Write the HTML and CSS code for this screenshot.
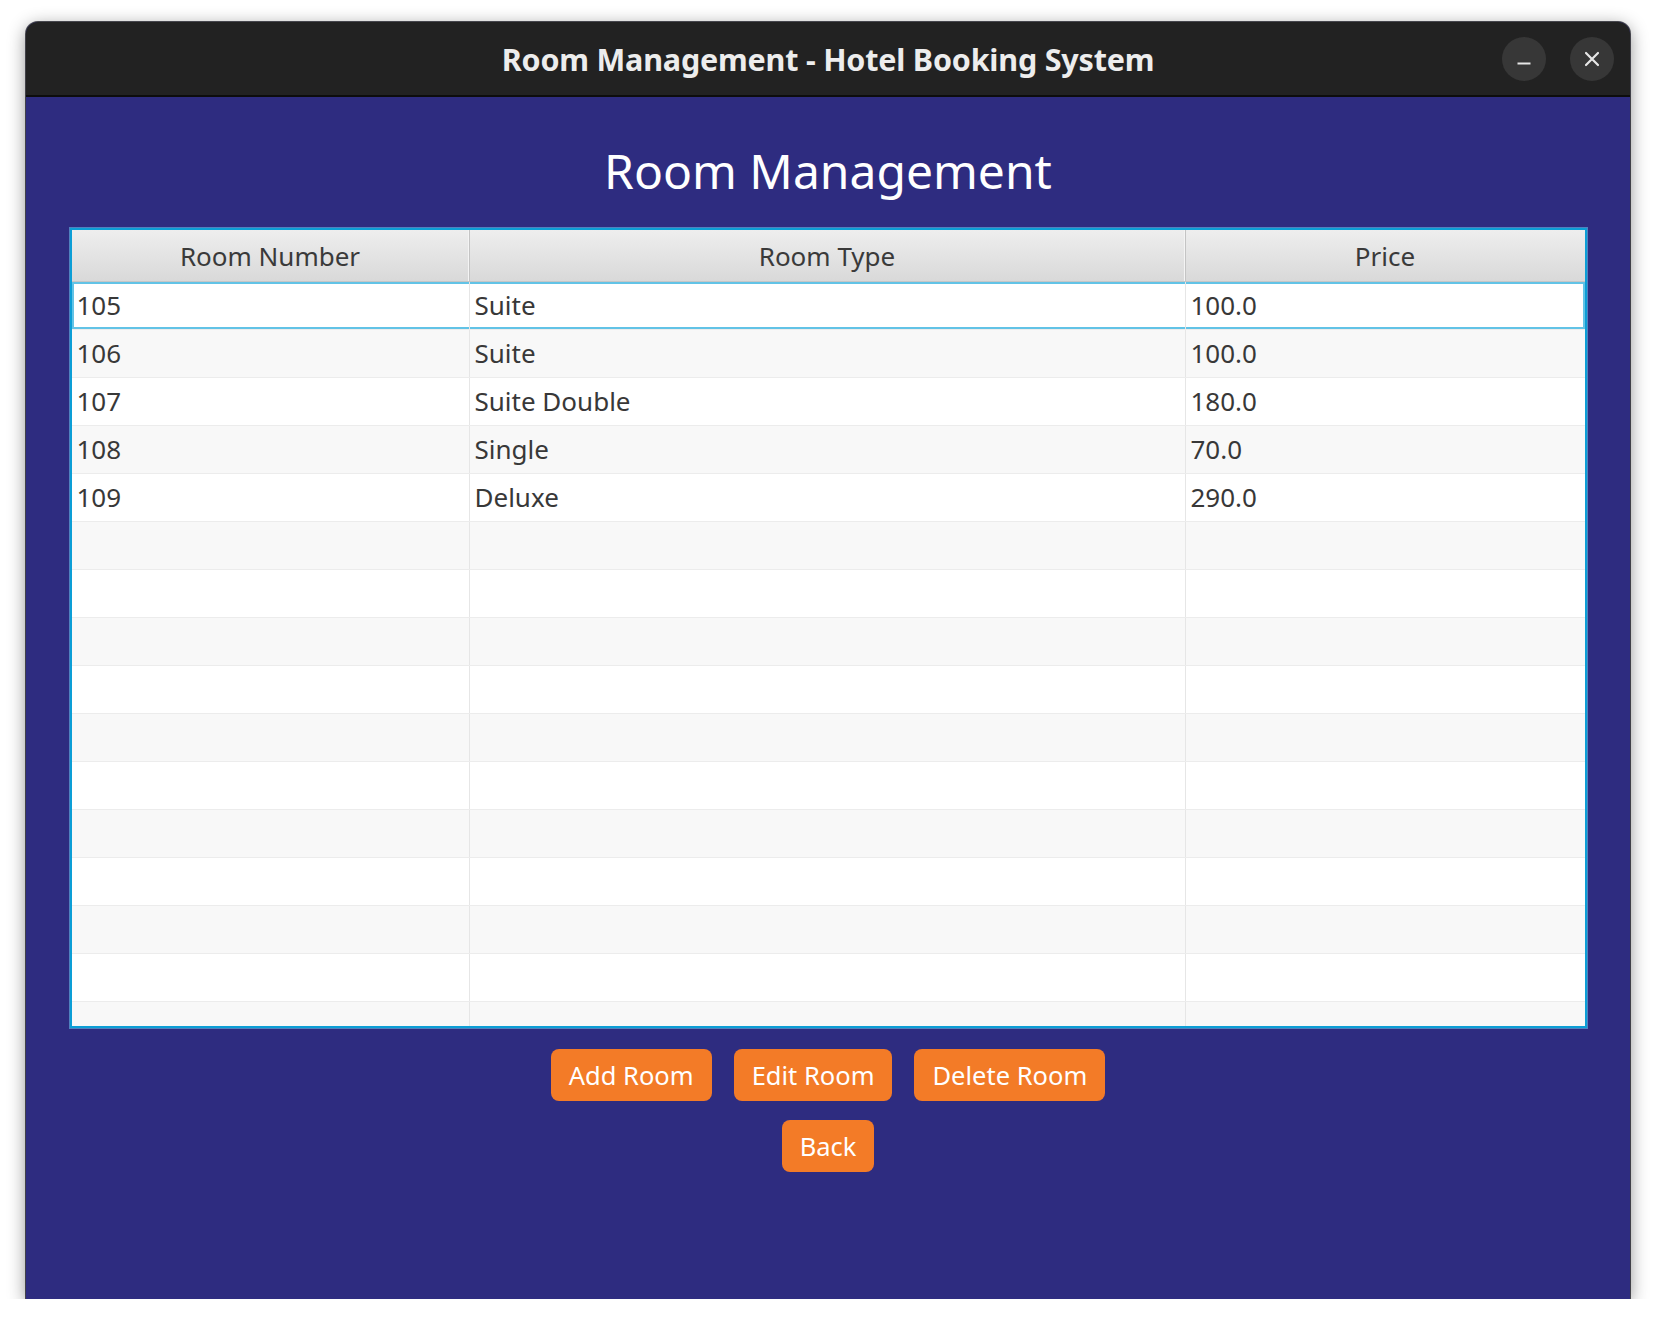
FILE: index.html
```html
<!DOCTYPE html>
<html lang="en">
<head>
<meta charset="utf-8">
<title>Room Management - Hotel Booking System</title>
<link rel="stylesheet" href="styles.css">
</head>
<body>
<div class="window">
  <header class="titlebar">
    <div class="tb-spacer"></div>
    <div class="title">Room Management - Hotel Booking System</div>
    <div class="controls">
      <button class="ctrl" aria-label="Minimize">
        <svg width="16" height="16" viewBox="0 0 16 16"><path d="M1.5 12.5 H14.5" stroke="#e6e6e6" stroke-width="2" stroke-linecap="butt"/></svg>
      </button>
      <button class="ctrl" aria-label="Close">
        <svg width="16" height="16" viewBox="0 0 16 16"><path d="M2 2 L14 14 M14 2 L2 14" stroke="#e6e6e6" stroke-width="2.2" stroke-linecap="round"/></svg>
      </button>
    </div>
  </header>
  <main class="content">
    <h1 class="heading">Room Management</h1>
    <div class="table">
      <div class="thead">
        <div class="th">Room Number</div>
        <div class="th">Room Type</div>
        <div class="th">Price</div>
      </div>
      <div class="tbody">
        <div class="row focused"><div class="td">105</div><div class="td">Suite</div><div class="td">100.0</div></div>
        <div class="row"><div class="td">106</div><div class="td">Suite</div><div class="td">100.0</div></div>
        <div class="row"><div class="td">107</div><div class="td">Suite Double</div><div class="td">180.0</div></div>
        <div class="row"><div class="td">108</div><div class="td">Single</div><div class="td">70.0</div></div>
        <div class="row"><div class="td">109</div><div class="td">Deluxe</div><div class="td">290.0</div></div>
        <div class="row"><div class="td"></div><div class="td"></div><div class="td"></div></div>
        <div class="row"><div class="td"></div><div class="td"></div><div class="td"></div></div>
        <div class="row"><div class="td"></div><div class="td"></div><div class="td"></div></div>
        <div class="row"><div class="td"></div><div class="td"></div><div class="td"></div></div>
        <div class="row"><div class="td"></div><div class="td"></div><div class="td"></div></div>
        <div class="row"><div class="td"></div><div class="td"></div><div class="td"></div></div>
        <div class="row"><div class="td"></div><div class="td"></div><div class="td"></div></div>
        <div class="row"><div class="td"></div><div class="td"></div><div class="td"></div></div>
        <div class="row"><div class="td"></div><div class="td"></div><div class="td"></div></div>
        <div class="row"><div class="td"></div><div class="td"></div><div class="td"></div></div>
        <div class="row"><div class="td"></div><div class="td"></div><div class="td"></div></div>
        <div class="row"><div class="td"></div><div class="td"></div><div class="td"></div></div>
      </div>
    </div>
    <div class="actions">
      <div class="btn-row">
        <button class="btn">Add Room</button>
        <button class="btn">Edit Room</button>
        <button class="btn">Delete Room</button>
      </div>
      <div class="btn-row">
        <button class="btn">Back</button>
      </div>
    </div>
  </main>
</div>
</body>
</html>
```

FILE: styles.css
```css
* { box-sizing: border-box; }

html, body {
  margin: 0;
  padding: 0;
  background: #ffffff;
}

body {
  font-family: "Noto Sans", "Open Sans", "DejaVu Sans", sans-serif;
  padding: 22px 0 0 26px;
}

.window {
  width: 1604px;
  height: 1277px;
  display: flex;
  flex-direction: column;
  background: #2e2c80;
  border-radius: 12px 12px 0 0;
  box-shadow: 0 0 0 1px rgba(20, 20, 30, 0.75), 0 4px 18px rgba(0, 0, 0, 0.45);
  overflow: hidden;
}

.titlebar {
  height: 75px;
  flex: 0 0 auto;
  display: grid;
  grid-template-columns: 1fr auto 1fr;
  align-items: center;
  background: #222222;
  border-bottom: 2px solid #0d0d0d;
}

.title {
  font-family: "Noto Sans", "Open Sans", sans-serif;
  font-weight: 700;
  font-size: 30.5px;
  color: #ededed;
  letter-spacing: -0.2px;
  white-space: nowrap;
}

.controls {
  justify-self: end;
  display: flex;
  gap: 24px;
  padding-right: 16px;
}

.ctrl {
  width: 44px;
  height: 44px;
  border-radius: 50%;
  border: none;
  padding: 0;
  background: #373737;
  display: flex;
  align-items: center;
  justify-content: center;
}

.content {
  flex: 1 1 auto;
  display: flex;
  flex-direction: column;
  align-items: center;
  padding-top: 41px;
}

.heading {
  margin: 0;
  font-size: 48px;
  font-weight: 400;
  line-height: 66px;
  color: #ffffff;
}

.table {
  margin-top: 24px;
  width: 1517px;
  height: 800px;
  background: #ffffff;
  border: 2px solid #0c9ed6;
  box-shadow: 0 0 0 1px rgba(110, 200, 240, 0.55);
  overflow: hidden;
  display: flex;
  flex-direction: column;
}

.thead {
  flex: 0 0 52px;
  display: grid;
  grid-template-columns: 398px 716px 1fr;
  background: linear-gradient(#eeeeee, #d9d9d9);
  border-bottom: 1px solid #c6c6c6;
}

.th {
  display: flex;
  align-items: center;
  justify-content: center;
  padding-top: 1px;
  font-size: 26px;
  color: #3a3a3a;
  border-right: 1px solid #c4c4c4;
  box-shadow: inset -1px 0 0 #f4f4f4;
}

.th:last-child {
  border-right: none;
  box-shadow: none;
}

.tbody {
  display: flex;
  flex-direction: column;
}

.row {
  flex: 0 0 48px;
  height: 48px;
  display: grid;
  grid-template-columns: 398px 716px 1fr;
  background: #ffffff;
  border-bottom: 1px solid #ececec;
}

.row:nth-child(even) {
  background: #f8f8f8;
}

.row.focused {
  background: #ffffff;
  box-shadow: inset 0 0 0 2px #62c3e6;
}

.td {
  padding-left: 5px;
  font-size: 26px;
  line-height: 47px;
  color: #383838;
  border-right: 1px solid #e6e6e6;
  white-space: nowrap;
}

.td:last-child {
  border-right: none;
}

.actions {
  margin-top: 21px;
  display: flex;
  flex-direction: column;
  align-items: center;
  gap: 19px;
}

.btn-row {
  display: flex;
  gap: 22px;
}

.btn {
  height: 52px;
  padding: 0 18px;
  border: none;
  border-radius: 8px;
  background: #f37b27;
  color: #ffffff;
  font-family: "Noto Sans", "Open Sans", sans-serif;
  font-size: 25.5px;
  line-height: 52px;
}
```
